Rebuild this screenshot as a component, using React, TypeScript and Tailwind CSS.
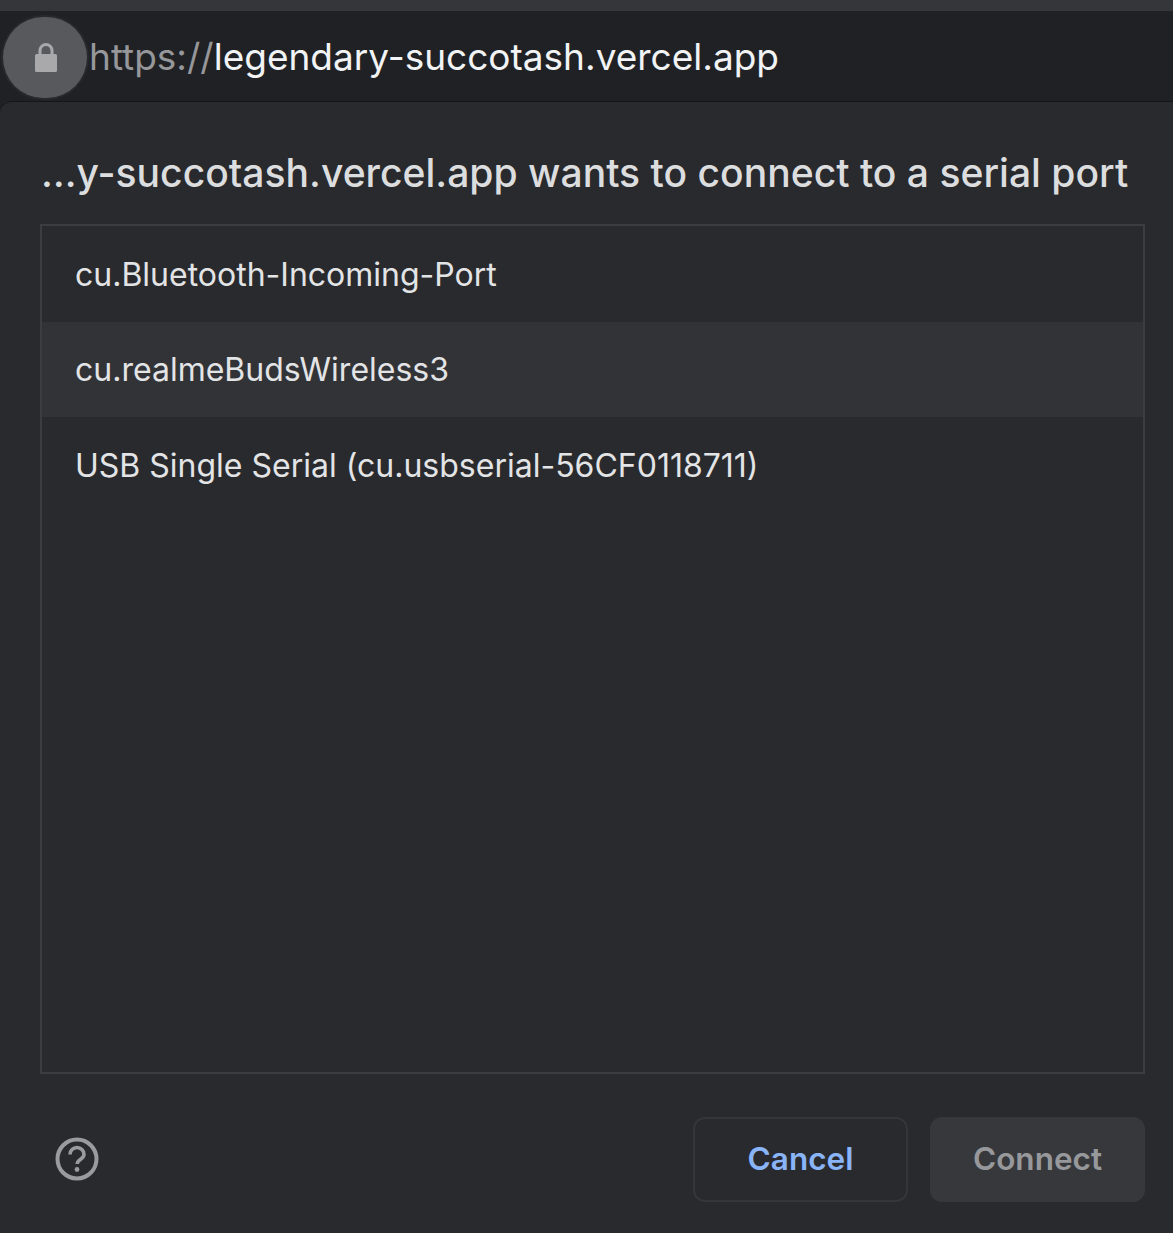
const PORTS = [
  { name: 'cu.Bluetooth-Incoming-Port', selected: false },
  { name: 'cu.realmeBudsWireless3', selected: true },
  { name: 'USB Single Serial (cu.usbserial-56CF0118711)', selected: false },
];

function LockIcon() {
  return (
    <svg className="ml-[2px]" width="22" height="29" viewBox="0 0 22 29" aria-hidden>
      <path d="M5 13V7.5a6 6 0 0 1 12 0V13" fill="none" stroke="#a9a9ac" strokeWidth="3" />
      <rect x="0" y="11" width="22" height="18" rx="1.5" fill="#a9a9ac" />
    </svg>
  );
}

function HelpIcon() {
  return (
    <svg width="44" height="44" viewBox="0 0 44 44" fill="none" aria-hidden>
      <circle cx="22" cy="22" r="19.5" stroke="#9a9b9e" strokeWidth="4" />
      <path
        d="M15 17.5a7 7 0 0 1 14 0c0 4.5-6.8 5-6.8 9.5"
        stroke="#9a9b9e"
        strokeWidth="3.6"
        strokeLinecap="butt"
      />
      <circle cx="22" cy="32.5" r="2.4" fill="#9a9b9e" />
    </svg>
  );
}

export default function App() {
  return (
    <div className="flex h-[1233px] w-[1173px] flex-col overflow-hidden bg-[#202124] font-['Inter','Liberation_Sans',sans-serif]">
      <div className="h-[11px] shrink-0 bg-[#35363a]" />

      <div className="flex h-[90px] shrink-0 items-center bg-[#202124] pl-[3px] pt-[4px]">
        <div className="flex h-[81px] w-[84px] shrink-0 -translate-y-[1px] items-center justify-center rounded-full bg-[#58595c] ring-[2px] ring-[#28292c]">
          <LockIcon />
        </div>
        <div className="-mt-[3px] ml-[2px] whitespace-nowrap text-[37px] leading-none text-[#96979a]">
          https://<span className="text-[#f1f3f4]">legendary-succotash.vercel.app</span>
        </div>
      </div>

      <div className="flex min-h-0 flex-1 flex-col rounded-tl-[12px] border-t border-[#151618] bg-[#292a2d] pl-[40px] pr-[28px]">
        <h1 className="mt-[47px] h-[48px] whitespace-nowrap pl-[1px] text-[39.1px] font-medium leading-[48px] text-[#dcdddf]">
          …y-succotash.vercel.app wants to connect to a serial port
        </h1>

        <div className="mt-[27px] h-[850px] border-2 border-[#3c3d40]">
          {PORTS.map((port) => (
            <div
              key={port.name}
              className={`flex h-[95.5px] items-center pl-[33px] pt-[2px] text-[32px] leading-none text-[#e3e4e6] ${
                port.selected ? 'bg-[#323337]' : ''
              }`}
            >
              {port.name}
            </div>
          ))}
        </div>

        <div className="mt-[43px] flex items-center">
          <div className="ml-[15px] -mt-[2px]">
            <HelpIcon />
          </div>
          <div className="ml-auto flex gap-[22px]">
            <button
              type="button"
              className="h-[85px] w-[215px] rounded-[12px] border-2 border-[#35363a] pb-[2px] text-[31.5px] font-semibold text-[#8ab4f8]"
            >
              Cancel
            </button>
            <button
              type="button"
              className="h-[85px] w-[215px] rounded-[12px] bg-[#37383b] pb-[2px] text-[31.5px] font-semibold text-[#97989b]"
            >
              Connect
            </button>
          </div>
        </div>
      </div>
    </div>
  );
}
